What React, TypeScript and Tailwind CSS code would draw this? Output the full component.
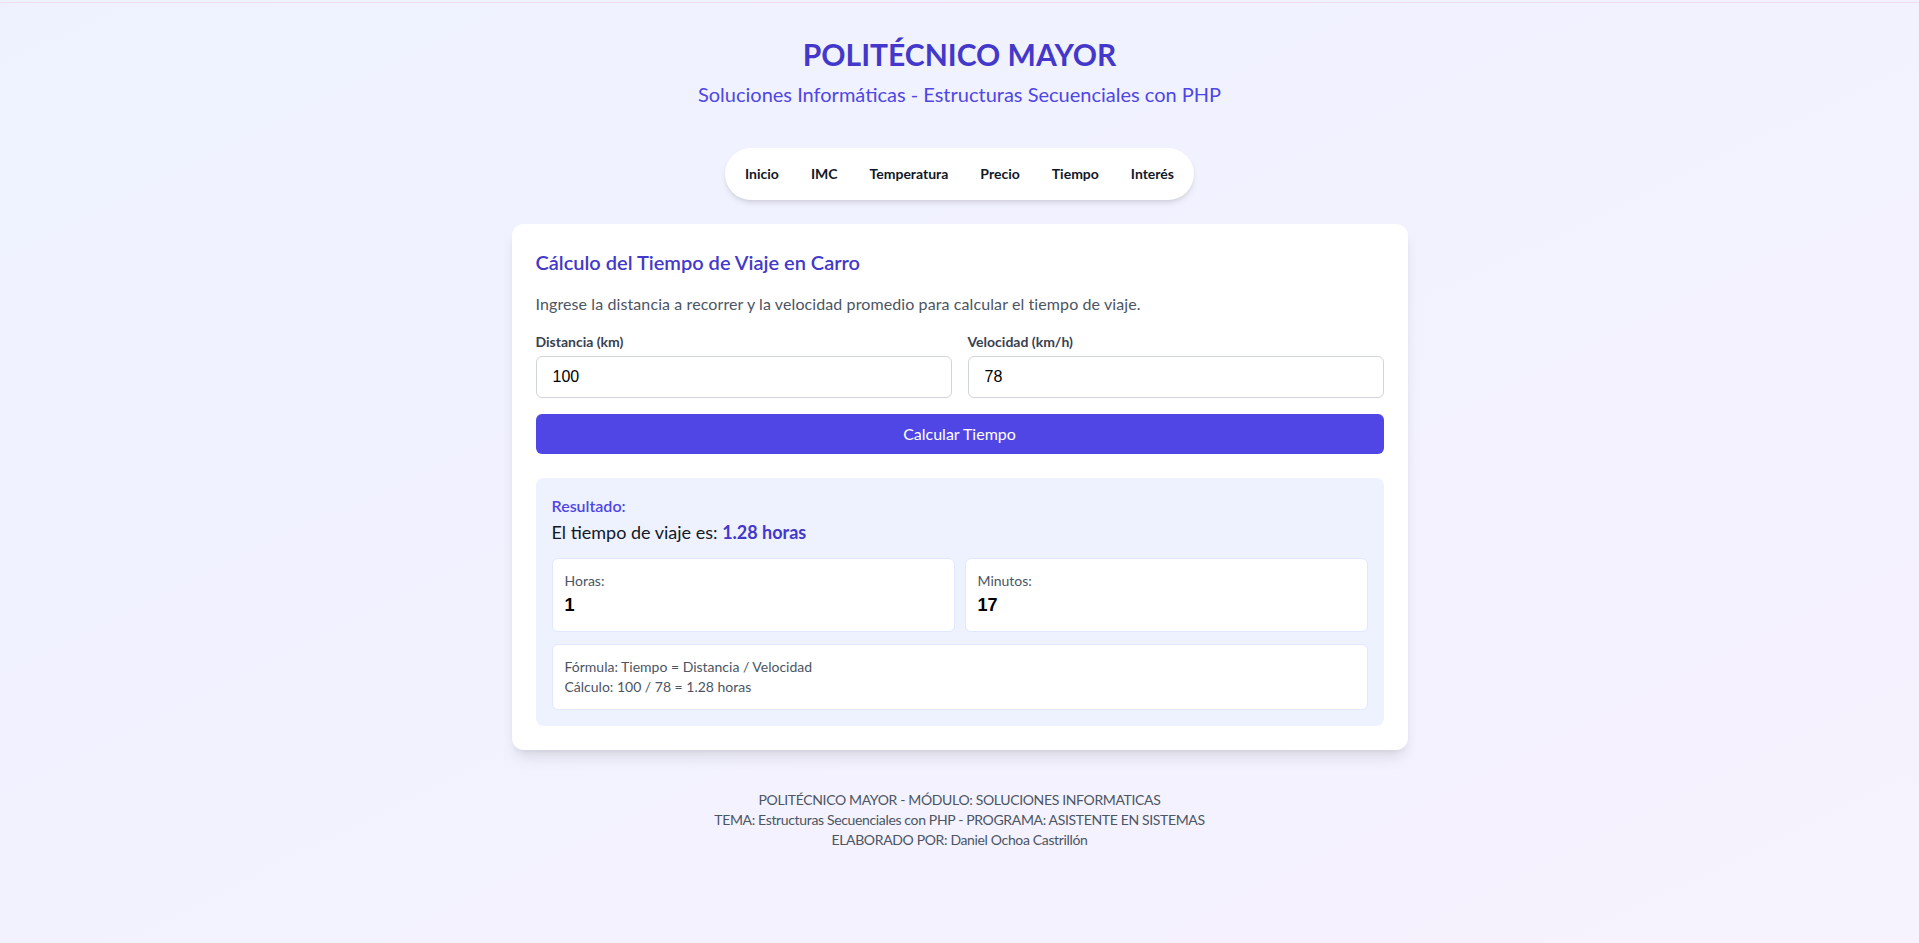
import { useState } from "react";

const App: React.FC = () => {
  const [distancia, setDistancia] = useState("100");
  const [velocidad, setVelocidad] = useState("78");

  const navItems = ["Inicio", "IMC", "Temperatura", "Precio", "Tiempo", "Interés"];

  return (
    <div className="min-h-screen bg-linear-to-br from-[#eef2ff] to-[#f6f2fe] font-['Lato',sans-serif]">
      {/* Top line */}
      <div className="h-[3px] border-b border-[#f1dcec]" />

      <div className="flex flex-col items-center pt-[33px] pb-10">
        {/* Header */}
        <header className="text-center mb-10">
          <h1 className="text-3xl font-bold text-[#4338ca]">POLITÉCNICO MAYOR</h1>
          <p className="mt-2 text-xl text-[#4f46e5]">
            Soluciones Informáticas - Estructuras Secuenciales con PHP
          </p>
        </header>

        {/* Nav */}
        <nav className="flex items-center bg-white rounded-full shadow-md px-1 py-2 mb-6">
          {navItems.map((item) => (
            <a
              key={item}
              href="#"
              className="px-4 py-2 text-sm font-bold text-[#111827] leading-5"
            >
              {item}
            </a>
          ))}
        </nav>

        {/* Card */}
        <div className="w-full max-w-4xl bg-white rounded-xl shadow-lg p-6">
          <h2 className="text-xl font-semibold text-[#4338ca] mb-4">
            Cálculo del Tiempo de Viaje en Carro
          </h2>
          <p className="text-[#4b5563] mb-4 tracking-[0.1px]">
            Ingrese la distancia a recorrer y la velocidad promedio para calcular el tiempo de viaje.
          </p>

          <form
            onSubmit={(e) => {
              e.preventDefault();
            }}
          >
            <div className="grid grid-cols-2 gap-4">
              <div>
                <label className="block text-sm font-bold text-[#374151] mb-1" htmlFor="distancia">
                  Distancia (km)
                </label>
                <input
                  id="distancia"
                  type="text"
                  value={distancia}
                  onChange={(e) => setDistancia(e.target.value)}
                  className="w-full h-[42px] px-4 border border-[#d1d5db] rounded-md font-['Liberation_Sans',sans-serif] text-base text-black focus:outline-none"
                />
              </div>
              <div>
                <label className="block text-sm font-bold text-[#374151] mb-1" htmlFor="velocidad">
                  Velocidad (km/h)
                </label>
                <input
                  id="velocidad"
                  type="text"
                  value={velocidad}
                  onChange={(e) => setVelocidad(e.target.value)}
                  className="w-full h-[42px] px-4 border border-[#d1d5db] rounded-md font-['Liberation_Sans',sans-serif] text-base text-black focus:outline-none"
                />
              </div>
            </div>

            <button
              type="submit"
              className="mt-4 w-full h-10 bg-[#4f46e5] text-white rounded-md text-base"
            >
              Calcular Tiempo
            </button>
          </form>

          {/* Result */}
          <div className="mt-6 bg-[#eef2ff] rounded-lg p-4">
            <h3 className="font-semibold text-[#4f46e5]">Resultado:</h3>
            <p className="text-lg text-[#111827]">
              El tiempo de viaje es: <span className="font-bold text-[#4338ca]">1.28 horas</span>
            </p>

            <div className="mt-3 grid grid-cols-2 gap-2.5">
              <div className="bg-white rounded-md border border-[#e0e7ff] p-3">
                <p className="text-sm text-[#4b5563]">Horas:</p>
                <p className="text-lg font-bold text-black font-['Liberation_Sans',sans-serif]">1</p>
              </div>
              <div className="bg-white rounded-md border border-[#e0e7ff] p-3">
                <p className="text-sm text-[#4b5563]">Minutos:</p>
                <p className="text-lg font-bold text-black font-['Liberation_Sans',sans-serif]">17</p>
              </div>
            </div>

            <div className="mt-3 bg-white rounded-md border border-[#e0e7ff] p-3 text-sm text-[#4b5563]">
              <p>Fórmula: Tiempo = Distancia / Velocidad</p>
              <p>Cálculo: 100 / 78 = 1.28 horas</p>
            </div>
          </div>
        </div>

        {/* Footer */}
        <footer className="mt-10 text-center text-sm tracking-tight text-[#4b5563]">
          <p>POLITÉCNICO MAYOR - MÓDULO: SOLUCIONES INFORMATICAS</p>
          <p>TEMA: Estructuras Secuenciales con PHP - PROGRAMA: ASISTENTE EN SISTEMAS</p>
          <p>ELABORADO POR: Daniel Ochoa Castrillón</p>
        </footer>
      </div>
    </div>
  );
};

export default App;
